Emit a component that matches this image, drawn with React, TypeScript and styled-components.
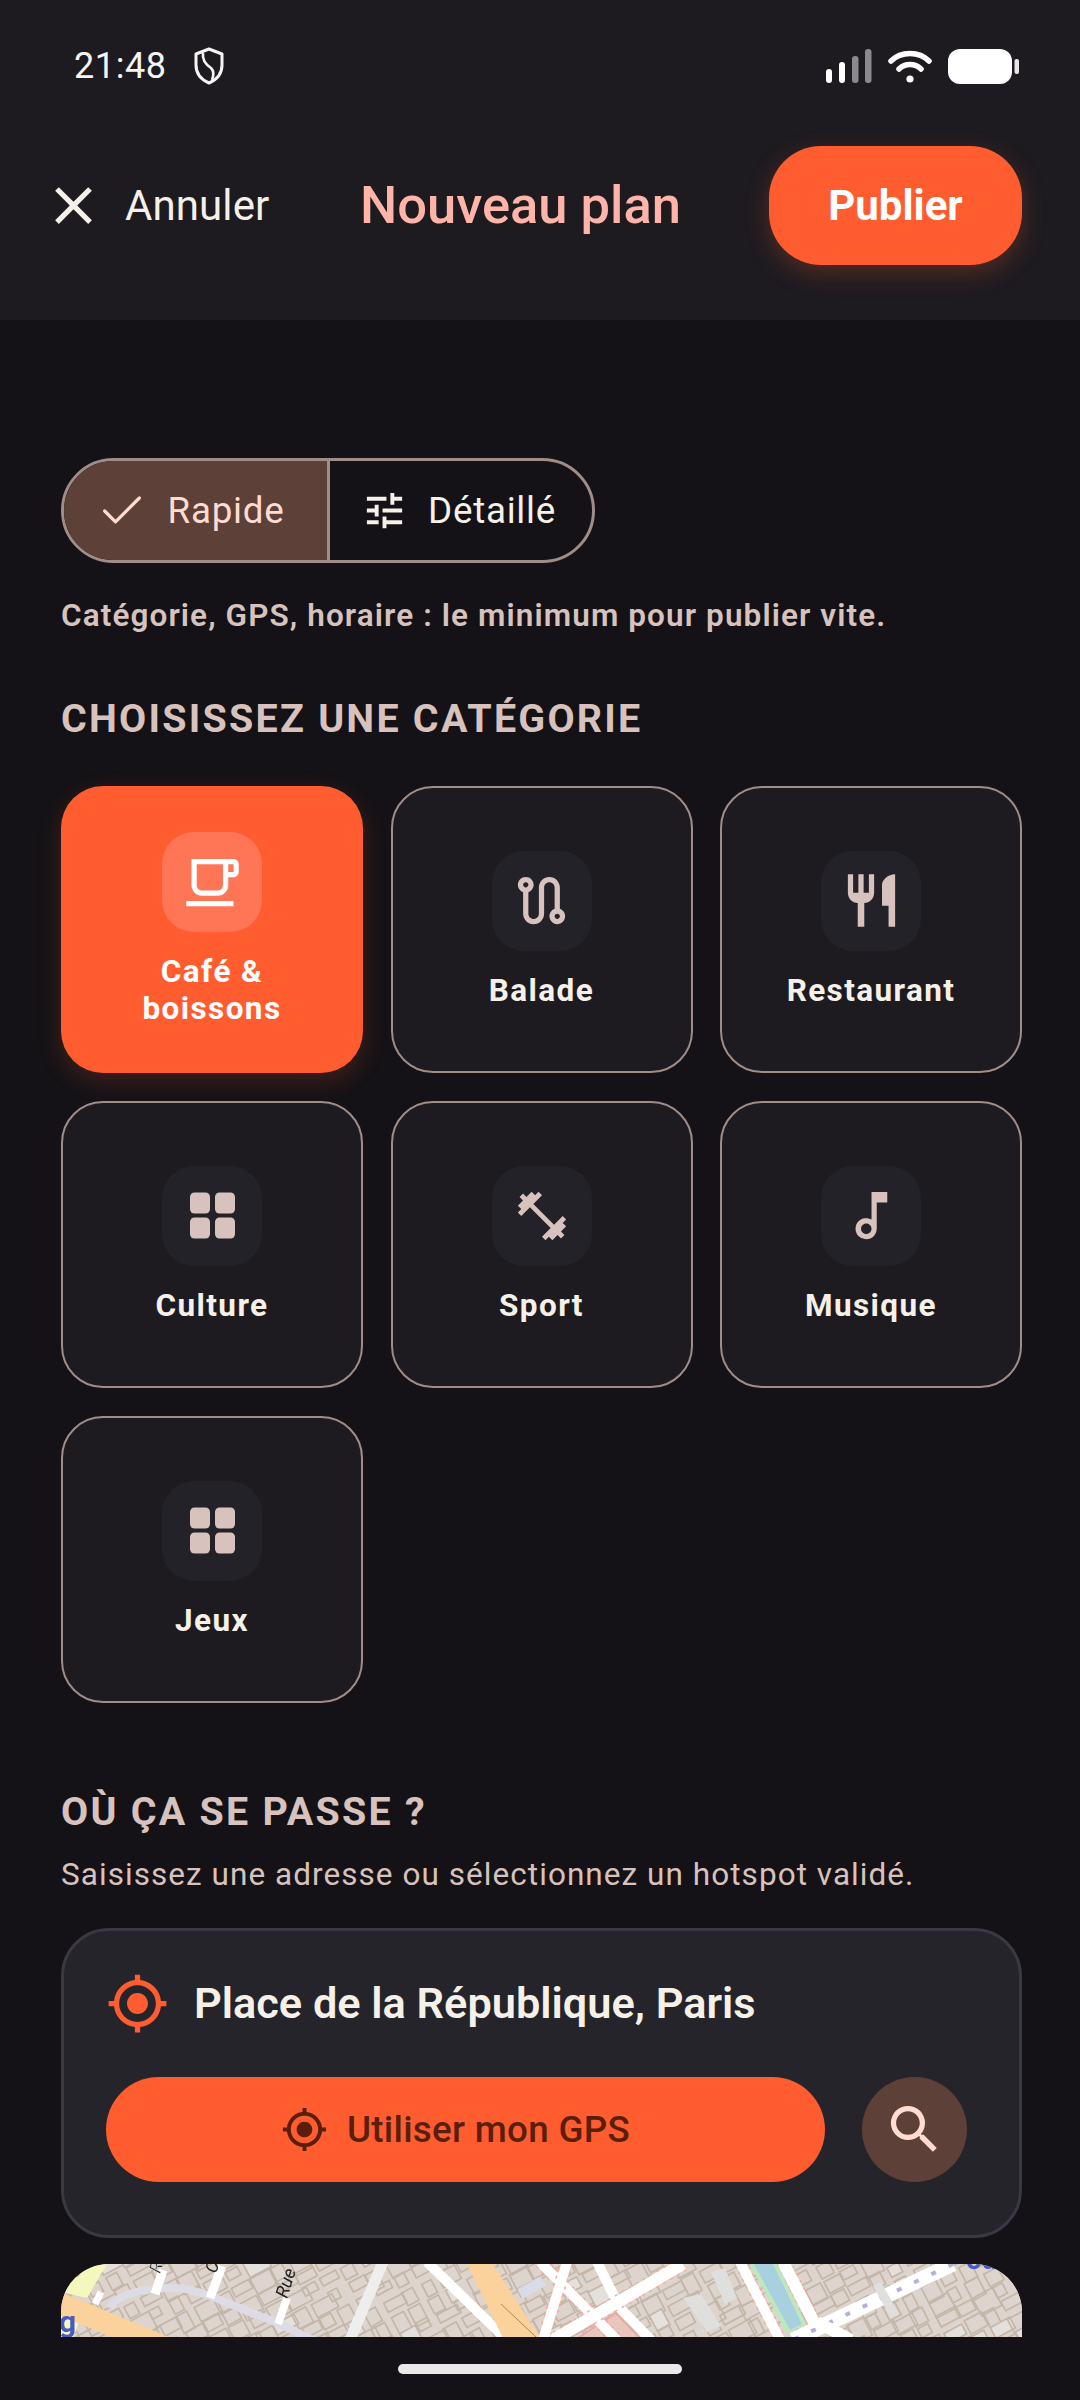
import React from "react";
import styled, { createGlobalStyle } from "styled-components";
import { MdClose, MdTune, MdOutlineLocalCafe, MdOutlineRoute, MdRestaurant, MdFitnessCenter, MdOutlineMusicNote, MdGpsFixed, MdSearch } from "react-icons/md";
import { Check } from "lucide-react";

const Global = createGlobalStyle`
  html, body { margin: 0; padding: 0; background: #141216; }
  * { box-sizing: border-box; }
  body { font-family: Roboto, "Noto Sans", sans-serif; }
`;

const Page = styled.div`
  width: 1080px; height: 2400px; overflow: hidden; display: flex; flex-direction: column;
  background: #141216; color: #f5f0e8;
`;
const Header = styled.header`
  height: 320px; flex: none; background: #1d1b20; display: flex; flex-direction: column;
`;
const StatusBar = styled.div`
  height: 132px; display: flex; align-items: center; justify-content: space-between;
  padding: 0 60px 0 74px;
`;
const StatusGroup = styled.div`
  display: flex; align-items: center; gap: ${(p: { $gap: number }) => p.$gap}px;
`;
const Clock = styled.span`
  font-size: 36px; color: #f5f5f5; letter-spacing: 0.6px; line-height: 40px;
`;
const Toolbar = styled.div`
  height: 146px; display: flex; align-items: center; padding: 0 58px 0 42px;
`;
const CancelIcon = styled(MdClose)`
  width: 63px; height: 63px; color: #f5f0e8; flex: none;
`;
const CancelText = styled.span`
  margin-left: 20px; width: 235px; font-size: 42px; font-weight: 400; color: #f5f0e8; letter-spacing: 0.1px;
`;
const Title = styled.h1`
  margin: 0; flex: 1; font-size: 52.5px; font-weight: 500; color: #ffb4a9; letter-spacing: 0;
`;
const PublishButton = styled.button`
  width: 253px; height: 119px; border: 0; border-radius: 52px; background: #ff5c30;
  color: #fff; font: 700 42px Roboto, sans-serif;
  box-shadow: 0 8px 24px rgba(255, 92, 48, 0.25);
`;
const Main = styled.main`
  flex: none; height: 2017px; overflow: hidden; padding: 138px 58px 0 61px;
`;
const Segment = styled.div`
  width: 534px; height: 105px; display: flex; border: 3px solid #a08d88; border-radius: 53px; overflow: hidden;
`;
const SegmentItem = styled.div<{ $active?: boolean }>`
  width: ${(p) => (p.$active ? 263 : 265)}px; display: flex; align-items: center; justify-content: center; gap: 20px;
  font-size: 36.75px; font-weight: 400; letter-spacing: 0.75px;
  padding-right: ${(p) => (p.$active ? 11 : 5)}px;
  color: ${(p) => (p.$active ? "#ffdbd1" : "#f5f0e8")};
  background: ${(p) => (p.$active ? "#5d4037" : "transparent")};
  & + & { border-left: 3px solid #a08d88; }
`;
const Hint = styled.p`
  margin: 33px 0 0; font-size: 31.5px; font-weight: 600; line-height: 40px; letter-spacing: 1.1px; color: #d7c2bd;
`;
const SectionTitle = styled.h2<{ $top: number }>`
  margin: ${(p) => p.$top}px 0 0; font-size: 39.4px; font-weight: 700; line-height: 44px; letter-spacing: 2.25px; color: #d7c2bd;
`;
const Grid = styled.div`
  margin-top: 45px; display: grid; grid-template-columns: repeat(3, 302px); grid-auto-rows: 287px; column-gap: 27.5px; row-gap: 28px;
`;
const Card = styled.div<{ $active?: boolean }>`
  display: flex; flex-direction: column; align-items: center; justify-content: center; gap: 21px;
  border-radius: 42px; text-align: center;
  border: ${(p) => (p.$active ? "0" : "2px solid #a08d88")};
  background: ${(p) => (p.$active ? "#ff5c30" : "#1d1b20")};
  box-shadow: ${(p) => (p.$active ? "0 8px 24px rgba(255, 92, 48, 0.2)" : "none")};
`;
const Tile = styled.div<{ $active?: boolean }>`
  width: 100px; height: 100px; border-radius: 32px; display: flex; align-items: center; justify-content: center;
  background: ${(p) => (p.$active ? "#ff7657" : "#232228")};
  color: ${(p) => (p.$active ? "#fff" : "#d7c2bd")};
  svg { width: 63px; height: 63px; }
`;
const SportIcon = styled(MdFitnessCenter)`
  && { width: 58px; height: 58px; }
`;
const CardLabel = styled.span<{ $active?: boolean }>`
  font-size: 31.5px; font-weight: 700; line-height: 37px; letter-spacing: 1.4px;
  color: ${(p) => (p.$active ? "#fff" : "#f5f0e8")};
`;
const SubText = styled.p`
  margin: 21px 0 0; font-size: 31.5px; line-height: 40px; letter-spacing: 1.05px; color: #d7c2bd;
`;
const PlaceCard = styled.section`
  margin-top: 33px; height: 310px; border: 3px solid #3a3842; border-radius: 48px; background: #25242a;
  padding: 39px 0 0 42px;
`;
const PlaceRow = styled.div`
  display: flex; align-items: center; gap: 25px; color: #ff5c30; height: 66px;
  svg { width: 63px; height: 63px; }
`;
const PlaceName = styled.span`
  font-size: 43.3px; font-weight: 600; color: #f5f0e8;
`;
const PlaceActions = styled.div`
  margin-top: 41px; display: flex; align-items: center; gap: 37px;
`;
const GpsButton = styled.button`
  width: 719px; height: 105px; border: 0; border-radius: 53px; background: #ff5c30; color: #5a1f0c;
  display: flex; align-items: center; justify-content: center; gap: 19px; padding: 0 20px 0 0;
  font: 500 36.75px Roboto, sans-serif; letter-spacing: 0.3px;
  svg { width: 47px; height: 47px; }
`;
const SearchButton = styled.button`
  width: 105px; height: 105px; border: 0; border-radius: 50%; background: #5d4037; color: #ffdbd1;
  display: flex; align-items: center; justify-content: center; padding: 0;
  svg { width: 63px; height: 63px; }
`;
const MapFrame = styled.div`
  margin-top: 26px; width: 961px; height: 300px; border-radius: 48px; overflow: hidden; background: #ddd5cd;
  svg { display: block; }
`;
const NavBar = styled.div`
  flex: 1; display: flex; justify-content: center; padding-top: 27px;
`;
const HomePill = styled.div`
  width: 284px; height: 10px; border-radius: 5px; background: #e9e9e9;
`;

const GridIcon = () => (
  <svg viewBox="0 0 63 63" fill="currentColor">
    <rect x="9" y="8.5" width="20" height="21" rx="4.5" />
    <rect x="34" y="8.5" width="20" height="21" rx="4.5" />
    <rect x="9" y="33.5" width="20" height="21" rx="4.5" />
    <rect x="34" y="33.5" width="20" height="21" rx="4.5" />
  </svg>
);

const ShieldIcon = () => (
  <svg width="32" height="38" viewBox="0 0 32 38" fill="none" stroke="#f5f5f5" strokeWidth="3" strokeLinejoin="round">
    <path d="M16 2 L29 7 V18 C29 27 23 33 16 36 C9 33 3 27 3 18 V7 Z" />
    <path d="M10 6 C9 13 12 17 18 21 C21 24 21 28 19 33" strokeWidth="2.6" />
  </svg>
);

const SignalIcon = () => (
  <svg width="46" height="34" viewBox="0 0 46 34">
    <rect x="0" y="20" width="6" height="14" rx="3" fill="#fff" />
    <rect x="13" y="13" width="6" height="21" rx="3" fill="#fff" />
    <rect x="26" y="7" width="6.5" height="27" rx="3" fill="#8a8a8c" />
    <rect x="39" y="0" width="6.5" height="34" rx="3" fill="#8a8a8c" />
  </svg>
);

const WifiIcon = () => (
  <svg width="44" height="33" viewBox="0 0 44 33" fill="none" stroke="#fff" strokeWidth="5.5" strokeLinecap="round">
    <path d="M3 11 C13 1 31 1 41 11" />
    <path d="M11 19 C17 13 27 13 33 19" />
    <circle cx="22" cy="29" r="3.6" fill="#fff" stroke="none" />
  </svg>
);

const BatteryIcon = () => (
  <svg width="72" height="35" viewBox="0 0 72 35">
    <rect x="0" y="0" width="64" height="35" rx="12" fill="#fff" />
    <rect x="66.5" y="10" width="4.5" height="15" rx="2" fill="#e6e6e6" />
  </svg>
);

const rng = (seed: number) => () => {
  seed = (seed * 16807) % 2147483647;
  return seed / 2147483647;
};

const BuildingLines = () => {
  const r = rng(4242);
  const cells: React.ReactElement[] = [];
  for (let x = -40; x < 1000; x += 21) {
    for (let y = -240; y < 320; y += 17) {
      const w = 10 + r() * 14;
      const h = 8 + r() * 12;
      const dx = r() * 4;
      const dy = r() * 3;
      cells.push(<rect key={`${x}-${y}`} x={x + dx} y={y + dy} width={w} height={h} fill={r() > 0.9 ? "#e4e1dc" : "none"} stroke="#c4b6a8" strokeWidth="1.7" />);
    }
  }
  return <g transform="rotate(-28 480 40)">{cells}</g>;
};

const CityMap = () => (
  <svg width="961" height="74" viewBox="0 0 961 74">
    <defs>
      <filter id="soft"><feGaussianBlur stdDeviation="0.7" /></filter>
    </defs>
    <g filter="url(#soft)" fill="none" strokeLinecap="butt">
      <rect width="961" height="74" fill="#ddd5cd" />
      <BuildingLines />
      <polygon points="0,0 46,0 26,34 0,28" fill="#f5f8bc" />
      <polygon points="0,50 18,58 12,74 0,74" fill="#f5f8bc" />
      <polygon points="0,0 24,0 18,12 4,18 0,18" fill="#b6b183" />
      <path d="M-10 36 L115 88" stroke="#fcd29c" strokeWidth="22" />
      <path d="M49 44 C55 30 85 24 112 24 C140 24 170 42 212 57 L256 78" stroke="#dcdbe6" strokeWidth="8" />
      <path d="M94 30 L102 6" stroke="#fff" strokeWidth="9" />
      <path d="M149 34 L161 2" stroke="#fff" strokeWidth="9" />
      <path d="M217 60 L226 34" stroke="#fff" strokeWidth="8" />
      <path d="M34 40 L40 28" stroke="#fff" strokeWidth="7" />
      <path d="M322 -2 L289 76" stroke="#eeeeee" strokeWidth="11" />
      <path d="M482 17 L459 30" stroke="#d9dce8" strokeWidth="11" />
      <polygon points="517,74 555,49 579,74" fill="#e9c5bd" stroke="#eaa9a0" strokeWidth="2" />
      <path d="M366 -2 L446 76" stroke="#fff" strokeWidth="10" />
      <polygon points="406,0 432,0 479,74 442,74" fill="#fcd29c" />
      <path d="M440 40 L476 74" stroke="#8d7a2e" strokeWidth="0.8" />
      <path d="M479 -2 L556 76" stroke="#f7a99a" strokeWidth="13" strokeDasharray="3 5" />
      <path d="M479 -2 L556 76" stroke="#fff" strokeWidth="10" />
      <path d="M506 -2 L482 76" stroke="#f7a99a" strokeWidth="13" strokeDasharray="3 5" />
      <path d="M506 -2 L482 76" stroke="#fff" strokeWidth="10" />
      <path d="M536 -2 L559 44 L590 76" stroke="#fff" strokeWidth="10" />
      <path d="M622 0 L492 76" stroke="#f7a99a" strokeWidth="15" strokeDasharray="3 5" />
      <path d="M622 0 L492 76" stroke="#fff" strokeWidth="12" />
      <polygon points="622,34 640,30 660,62 646,68" fill="#dfdfdd" />
      <polygon points="650,8 664,4 676,34 664,40" fill="#dfdfdd" />
      <path d="M679 -2 L719 76" stroke="#f7a99a" strokeWidth="13" strokeDasharray="3 5" />
      <path d="M679 -2 L719 76" stroke="#fff" strokeWidth="10" />
      <path d="M722 -2 L757 66" stroke="#f7a99a" strokeWidth="15" strokeDasharray="3 5" />
      <path d="M722 -2 L757 66" stroke="#fff" strokeWidth="12" />
      <polygon points="689,0 716,0 745,60 726,70" fill="#bde8bd" />
      <polygon points="693,0 712,0 741,60 729,66" fill="#a9d0de" />
      <path d="M892 0 L732 76" stroke="#fff" strokeWidth="15" />
      <path d="M892 0 L732 76" stroke="#b5b0d6" strokeWidth="4" strokeDasharray="5 14" />
      <path d="M756 58 L790 76" stroke="#fff" strokeWidth="12" />
      <polygon points="812,22 820,18 838,50 830,54" fill="#dfdfdd" />
      <text x="-2" y="68" fontFamily="Roboto, sans-serif" fontWeight="700" fontSize="30" fill="#4a5ac0">g</text>
      <text x="905" y="5" fontFamily="Roboto, sans-serif" fontWeight="700" fontSize="28" fill="#4a5ac0">ou</text>
      <text transform="translate(99 10) rotate(-72)" fontFamily="Roboto, sans-serif" fontStyle="italic" fontSize="17" fill="#222" stroke="#fff" strokeWidth="0.3">Rue</text>
      <text transform="translate(155 10) rotate(-72)" fontFamily="Roboto, sans-serif" fontStyle="italic" fontSize="17" fill="#222">Ci</text>
      <text transform="translate(226 35) rotate(-72)" fontFamily="Roboto, sans-serif" fontStyle="italic" fontSize="18" fill="#222">Rue</text>
    </g>
  </svg>
);

const categories = [
  { label: <>Café &<br />boissons</>, icon: <MdOutlineLocalCafe />, active: true },
  { label: "Balade", icon: <MdOutlineRoute /> },
  { label: "Restaurant", icon: <MdRestaurant /> },
  { label: "Culture", icon: <GridIcon /> },
  { label: "Sport", icon: <SportIcon /> },
  { label: "Musique", icon: <MdOutlineMusicNote /> },
  { label: "Jeux", icon: <GridIcon /> },
];

export default function App() {
  return (
    <Page>
      <Global />
      <Header>
        <StatusBar>
          <StatusGroup $gap={26}>
            <Clock>21:48</Clock>
            <ShieldIcon />
          </StatusGroup>
          <StatusGroup $gap={16}>
            <SignalIcon />
            <WifiIcon />
            <BatteryIcon />
          </StatusGroup>
        </StatusBar>
        <Toolbar>
          <CancelIcon />
          <CancelText>Annuler</CancelText>
          <Title>Nouveau plan</Title>
          <PublishButton>Publier</PublishButton>
        </Toolbar>
      </Header>
      <Main>
        <Segment>
          <SegmentItem $active>
            <Check size={52} strokeWidth={1.5} />
            Rapide
          </SegmentItem>
          <SegmentItem>
            <MdTune size={47} />
            Détaillé
          </SegmentItem>
        </Segment>
        <Hint>Catégorie, GPS, horaire : le minimum pour publier vite.</Hint>
        <SectionTitle $top={61}>CHOISISSEZ UNE CATÉGORIE</SectionTitle>
        <Grid>
          {categories.map((c, i) => (
            <Card key={i} $active={c.active}>
              <Tile $active={c.active}>{c.icon}</Tile>
              <CardLabel $active={c.active}>{c.label}</CardLabel>
            </Card>
          ))}
        </Grid>
        <SectionTitle $top={87}>OÙ ÇA SE PASSE ?</SectionTitle>
        <SubText>Saisissez une adresse ou sélectionnez un hotspot validé.</SubText>
        <PlaceCard>
          <PlaceRow>
            <MdGpsFixed />
            <PlaceName>Place de la République, Paris</PlaceName>
          </PlaceRow>
          <PlaceActions>
            <GpsButton>
              <MdGpsFixed />
              Utiliser mon GPS
            </GpsButton>
            <SearchButton>
              <MdSearch />
            </SearchButton>
          </PlaceActions>
        </PlaceCard>
        <MapFrame>
          <CityMap />
        </MapFrame>
      </Main>
      <NavBar>
        <HomePill />
      </NavBar>
    </Page>
  );
}
